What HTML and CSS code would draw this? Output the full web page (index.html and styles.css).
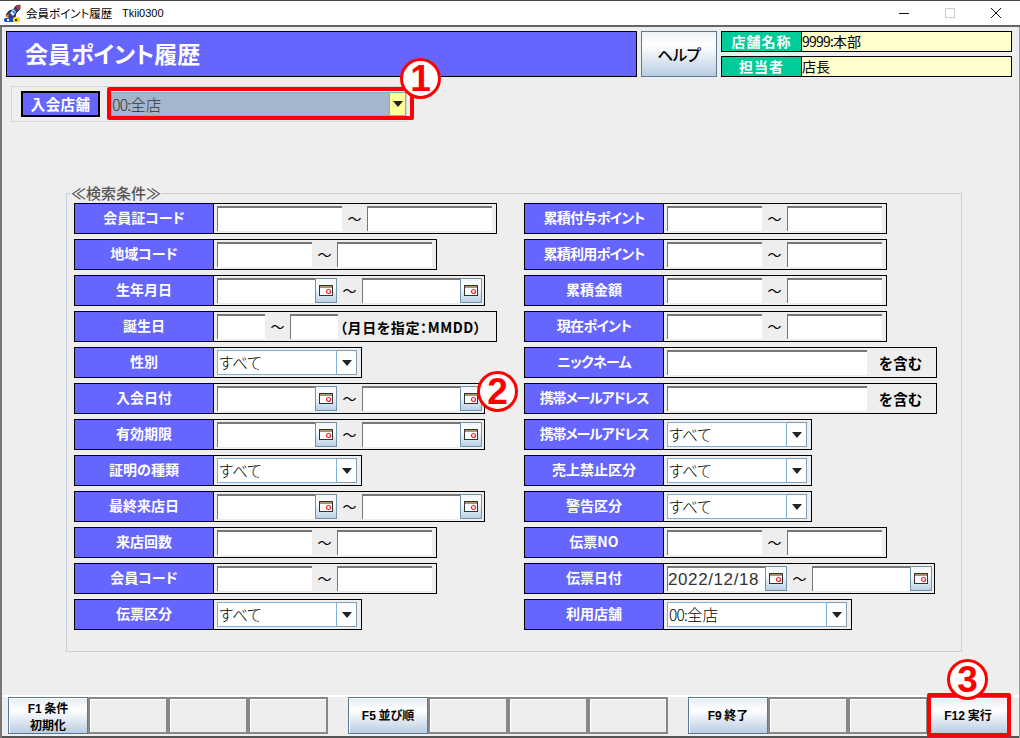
FILE: index.html
```html
<!DOCTYPE html>
<html lang="ja">
<head>
<meta charset="utf-8">
<title>会員ポイント履歴</title>
<link rel="stylesheet" href="styles.css">
</head>
<body>
<div class="window">
  <div class="titlebar">
    <svg class="appicon" width="18" height="18" viewBox="0 0 18 18"><path d="M2 11 L5 7 L9 6 L12 2 L16 1 L16 5 L12 9 L11 13 L7 15 Z" fill="#2a3a8c" stroke="#111" stroke-width=".8"/><path d="M12 2 L16 1 L16 5 L14 6 Z" fill="#e03020"/><path d="M6 9 L10 5 L12 8 L9 12 Z" fill="#e8eefc"/><circle cx="10" cy="8" r="1.5" fill="#2a8ee0"/><path d="M1 12 L5 10 L4 14 Z" fill="#f08020"/><rect x="0" y="14" width="10" height="4" rx="1.5" fill="#1c50c0"/><rect x="9" y="13" width="7" height="5" rx="1.5" fill="#f8d800"/><rect x="3" y="15" width="2" height="2" fill="#fff"/><rect x="11" y="15" width="2" height="2" fill="#223"/></svg>
    <span class="apptitle">会員ポイント履歴</span>
    <span class="appid">Tkii0300</span>
    <div class="winctl">
      <svg width="12" height="12" viewBox="0 0 12 12"><path d="M1 6.5H11" stroke="#111" stroke-width="1"/></svg>
      <svg width="12" height="12" viewBox="0 0 12 12"><rect x="1.5" y="1.5" width="9" height="9" fill="none" stroke="#ccc"/></svg>
      <svg width="12" height="12" viewBox="0 0 12 12"><path d="M1 1L11 11M11 1L1 11" stroke="#111" stroke-width="1"/></svg>
    </div>
  </div>
  <div class="client">
    <div class="header">
      <h1 class="pagetitle">会員ポイント履歴</h1>
      <button class="help">ヘルプ</button>
      <div class="shopinfo">
        <div class="inforow"><span class="infolabel">店舗名称</span><span class="infovalue"><span class="num">9999:</span>本部</span></div>
        <div class="inforow"><span class="infolabel">担当者</span><span class="infovalue">店長</span></div>
      </div>
    </div>

    <div class="storebar">
      <span class="storelabel">入会店舗</span>
      <div class="storecombo"><span class="storevalue"><span class="num">00:</span>全店</span><span class="storearrow"><i class="tri"></i></span></div>
      <span class="redframe frame1"></span>
      <span class="marker marker1">1</span>
    </div>

    <fieldset class="search">
      <legend>≪検索条件≫</legend>
      <div class="cols">
        <div class="col">
          <div class="row"><span class="lab">会員証コード</span><div class="val"><span class="inp w125"></span><span class="til">～</span><span class="inp w125"></span></div></div>
          <div class="row"><span class="lab">地域コード</span><div class="val"><span class="inp w95"></span><span class="til">～</span><span class="inp w95"></span></div></div>
          <div class="row"><span class="lab">生年月日</span><div class="val dates"><span class="inp w98"></span><span class="cal"><svg width="14" height="11" viewBox="0 0 14 11"><use href="#calicon"/></svg></span><span class="til">～</span><span class="inp w98"></span><span class="cal"><svg width="14" height="11" viewBox="0 0 14 11"><use href="#calicon"/></svg></span></div></div>
          <div class="row"><span class="lab">誕生日</span><div class="val"><span class="inp w48"></span><span class="til">～</span><span class="inp w48"></span><span class="note">（月日を指定：MMDD）</span></div></div>
          <div class="row"><span class="lab">性別</span><div class="val"><span class="sel w120">すべて</span><span class="arrow"><i class="tri"></i></span></div></div>
          <div class="row"><span class="lab">入会日付</span><div class="val dates"><span class="inp w98"></span><span class="cal"><svg width="14" height="11" viewBox="0 0 14 11"><use href="#calicon"/></svg></span><span class="til">～</span><span class="inp w98"></span><span class="cal"><svg width="14" height="11" viewBox="0 0 14 11"><use href="#calicon"/></svg></span></div></div>
          <div class="row"><span class="lab">有効期限</span><div class="val dates"><span class="inp w98"></span><span class="cal"><svg width="14" height="11" viewBox="0 0 14 11"><use href="#calicon"/></svg></span><span class="til">～</span><span class="inp w98"></span><span class="cal"><svg width="14" height="11" viewBox="0 0 14 11"><use href="#calicon"/></svg></span></div></div>
          <div class="row"><span class="lab">証明の種類</span><div class="val"><span class="sel w120">すべて</span><span class="arrow"><i class="tri"></i></span></div></div>
          <div class="row"><span class="lab">最終来店日</span><div class="val dates"><span class="inp w98"></span><span class="cal"><svg width="14" height="11" viewBox="0 0 14 11"><use href="#calicon"/></svg></span><span class="til">～</span><span class="inp w98"></span><span class="cal"><svg width="14" height="11" viewBox="0 0 14 11"><use href="#calicon"/></svg></span></div></div>
          <div class="row"><span class="lab">来店回数</span><div class="val"><span class="inp w95"></span><span class="til">～</span><span class="inp w95"></span></div></div>
          <div class="row"><span class="lab">会員コード</span><div class="val"><span class="inp w95"></span><span class="til">～</span><span class="inp w95"></span></div></div>
          <div class="row"><span class="lab">伝票区分</span><div class="val"><span class="sel w120">すべて</span><span class="arrow"><i class="tri"></i></span></div></div>
        </div>
        <div class="col">
          <div class="row"><span class="lab tight1">累積付与ポイント</span><div class="val"><span class="inp w95"></span><span class="til">～</span><span class="inp w95"></span></div></div>
          <div class="row"><span class="lab tight1">累積利用ポイント</span><div class="val"><span class="inp w95"></span><span class="til">～</span><span class="inp w95"></span></div></div>
          <div class="row"><span class="lab">累積金額</span><div class="val"><span class="inp w95"></span><span class="til">～</span><span class="inp w95"></span></div></div>
          <div class="row"><span class="lab tight1">現在ポイント</span><div class="val"><span class="inp w95"></span><span class="til">～</span><span class="inp w95"></span></div></div>
          <div class="row"><span class="lab tight1">ニックネーム</span><div class="val"><span class="inp w200"></span><span class="incl">を含む</span></div></div>
          <div class="row"><span class="lab tight2">携帯メールアドレス</span><div class="val"><span class="inp w200"></span><span class="incl">を含む</span></div></div>
          <div class="row"><span class="lab tight2">携帯メールアドレス</span><div class="val"><span class="sel w120">すべて</span><span class="arrow"><i class="tri"></i></span></div></div>
          <div class="row"><span class="lab">売上禁止区分</span><div class="val"><span class="sel w120">すべて</span><span class="arrow"><i class="tri"></i></span></div></div>
          <div class="row"><span class="lab">警告区分</span><div class="val"><span class="sel w120">すべて</span><span class="arrow"><i class="tri"></i></span></div></div>
          <div class="row"><span class="lab">伝票NO</span><div class="val"><span class="inp w95"></span><span class="til">～</span><span class="inp w95"></span></div></div>
          <div class="row"><span class="lab">伝票日付</span><div class="val dates"><span class="inp w98 date">2022/12/18</span><span class="cal"><svg width="14" height="11" viewBox="0 0 14 11"><use href="#calicon"/></svg></span><span class="til">～</span><span class="inp w98"></span><span class="cal"><svg width="14" height="11" viewBox="0 0 14 11"><use href="#calicon"/></svg></span></div></div>
          <div class="row"><span class="lab">利用店舗</span><div class="val"><span class="sel w160"><span class="num">00:</span>全店</span><span class="arrow"><i class="tri"></i></span></div></div>
        </div>
      </div>
      <span class="marker marker2">2</span>
    </fieldset>

    <div class="fkeys">
      <div class="fgroup">
        <button class="fkey on two"><span><b class="fn">F1</b> 条件</span><span>初期化</span></button>
        <button class="fkey"></button><button class="fkey"></button><button class="fkey"></button>
      </div>
      <div class="fgroup">
        <button class="fkey on"><b class="fn">F5</b> 並び順</button>
        <button class="fkey"></button><button class="fkey"></button><button class="fkey"></button>
      </div>
      <div class="fgroup">
        <button class="fkey on"><b class="fn">F9</b> 終了</button>
        <button class="fkey"></button><button class="fkey"></button>
        <button class="fkey on"><b class="fn">F12</b> 実行</button>
      </div>
      <span class="redframe frame3"></span>
      <span class="marker marker3">3</span>
    </div>
  </div>
</div>
<svg class="defs" width="0" height="0"><defs><g id="calicon"><rect x="0.5" y="0.5" width="13" height="10" fill="#fff" stroke="#333"/><rect x="1" y="1" width="12" height="2" fill="#a8946a"/><circle cx="9.5" cy="6.5" r="2" fill="none" stroke="#e22" stroke-width="1.2"/></g></defs></svg>
</body>
</html>
```
FILE: styles.css
```css
* { box-sizing: border-box; }
html, body { margin: 0; padding: 0; width: 1020px; height: 738px; overflow: hidden; background: #eee; }
body { font-family: "Noto Sans CJK JP", "Liberation Sans", sans-serif; color: #000; }
.defs { position: absolute; }
.window { width: 1020px; height: 738px; border-top: 1px solid #444; display: flex; flex-direction: column; }
.titlebar { height: 26px; flex: none; background: #fff; display: flex; align-items: center; padding-left: 4px; font-size: 11px; border-bottom: 2px solid #666; }
.appicon { margin-right: 4px; }
.apptitle { font-size: 11.5px; width: 96px; font-feature-settings: "palt"; white-space: nowrap; }
.appid { font-family: "Liberation Sans", sans-serif; font-size: 11px; }
.winctl { margin-left: auto; display: flex; gap: 34px; margin-right: 18px; align-items: center; }
.client { flex: 1; position: relative; display: flex; flex-direction: column; border-left: 2px solid #777; border-right: 1px solid #999; padding-left: 4px; padding-top: 4px; background: #eee; }
.header { display: flex; height: 46px; }
.pagetitle { margin: 0; width: 631px; background: #66f; border: 1px solid #000; color: #fff; font-size: 23px; font-weight: 700; font-feature-settings: "palt"; padding-left: 18px; line-height: 42px; }
.help { width: 76px; margin-left: 4px; border: 1px solid #5a7a94; background: linear-gradient(#eef2f7, #fff 30%, #b9cde2); font-family: inherit; font-size: 15.5px; letter-spacing: -.4px; font-weight: 500; padding: 0; font-feature-settings: "palt"; }
.shopinfo { margin-left: 4px; width: 291px; display: flex; flex-direction: column; gap: 4px; }
.inforow { height: 21px; display: flex; border: 1px solid #000; }
.infolabel { width: 80px; background: #0c9; color: #fff; font-size: 14px; font-weight: 700; text-align: center; line-height: 18px; border-right: 1px solid #000; letter-spacing: 1px; }
.infovalue { flex: 1; background: #ffc; font-size: 14px; line-height: 18px; font-weight: 400; }
.num { letter-spacing: -.8px; }
.storebar { position: relative; margin: 9px 0 0 5px; width: 396px; height: 36px; border: 1px solid #cfd8e2; display: flex; align-items: center; padding-left: 9px; }
.storelabel { width: 80px; height: 26px; background: #66f; border: 2px solid #000; color: #fff; font-size: 14.5px; font-weight: 700; line-height: 21px; text-align: center; letter-spacing: .4px; white-space: nowrap; }
.storecombo { margin-left: 11px; width: 298px; height: 24px; display: flex; background: #a3b6cb; border: 1px solid #7fb0c8; }
.storevalue { width: 278px; font-size: 15.5px; font-weight: 300; line-height: 22px; color: #333; border-right: 1px solid #7fb0c8; }
.storearrow { flex: 1; background: #ff9; display: flex; align-items: center; justify-content: center; }
.tri { display: block; width: 0; height: 0; border-left: 5px solid transparent; border-right: 5px solid transparent; border-top: 6px solid #222; }
.redframe { position: absolute; border: 4px solid #f00; border-radius: 2px; }
.frame1 { left: 95px; top: 0; width: 307px; height: 33px; }
.marker { position: absolute; z-index: 2; width: 41px; height: 41px; border: 3px solid #f00; border-radius: 50%; background: #fff; color: #f00; font-family: "Liberation Sans", sans-serif; font-size: 37px; font-weight: 700; line-height: 35px; text-align: center; }
.marker1 { left: 388px; top: -29px; }
.search { margin: 64px 0 0 60px; padding: 0; width: 896px; height: 466px; border: 1px solid #c9cfd8; position: relative; min-inline-size: 0; }
.search legend { font-size: 15px; color: #555; padding: 0 1px; margin-left: 3px; line-height: 14px; font-weight: 500; white-space: nowrap; }
.cols { display: flex; gap: 0; padding: 3px 0 0 7px; }
.col { width: 450px; flex: none; display: flex; flex-direction: column; gap: 5px; }
.row { display: flex; height: 31px; }
.lab { width: 140px; background: #66f; border: 1px solid #000; color: #fff; font-size: 14px; font-weight: 700; text-align: center; line-height: 27px; font-feature-settings: "palt"; white-space: nowrap; flex: none; }
.tight1 { letter-spacing: -.7px; }
.tight2 { letter-spacing: -1.2px; }
.val { display: flex; align-items: center; border: 1px solid #000; border-left: 0; padding: 0 4px 0 3px; height: 31px; }
.dates { padding-right: 2px; }
.inp { display: block; flex: none; height: 25px; background: #fff; border-top: 2px solid #777; border-left: 1px solid #777; font-size: 15px; line-height: 23px; color: #333; }
.date { font-family: "Liberation Sans", sans-serif; font-size: 17px; letter-spacing: .6px; white-space: nowrap; overflow: visible; }
.w125 { width: 125px; } .w95 { width: 95px; } .w98 { width: 98px; } .w48 { width: 48px; } .w200 { width: 200px; }
.til { width: 25px; height: 25px; text-align: center; font-size: 14px; line-height: 24px; flex: none; background: #eee; }
.cal { width: 22px; height: 25px; border: 1px solid #6e93ad; background: linear-gradient(#f0f4f8, #fff 30%, #bcd0e4); display: flex; align-items: center; justify-content: center; flex: none; }
.note { font-size: 14px; font-weight: 700; width: 154px; white-space: nowrap; font-feature-settings: "palt"; letter-spacing: .6px; padding-left: 2px; }
.sel { height: 25px; display: block; background: #fff; border: 1px solid #7fb0d8; font-size: 15.5px; font-weight: 300; line-height: 22px; padding-left: 1px; font-feature-settings: "palt"; color: #000; }
.w120 { width: 120px; } .w160 { width: 160px; }
.arrow { width: 20px; height: 25px; background: #fff; border: 1px solid #7f9db5; border-left: 0; display: flex; align-items: center; justify-content: center; }
.incl { width: 65px; font-size: 14.5px; font-weight: 700; text-align: center; height: 25px; line-height: 25px; padding-left: 2px; }
.marker2 { left: 410px; top: 171px; }
.fkeys { position: absolute; left: 0; right: 0; bottom: 0; height: 43px; border-top: 2px solid #fff; padding: 0 0 2px 6px; display: flex; gap: 20px; border-bottom: 2px solid #555; }
.fgroup { display: flex; height: 37px; }
.fkey { width: 80px; height: 37px; border: 2px solid #888; background: #eee; font-family: inherit; font-size: 12px; font-weight: 700; padding: 0; line-height: 15px; font-feature-settings: "palt"; box-shadow: inset 1px 1px 0 #fff; }
.fkey.on { border: 1px solid #5a7a94; background: linear-gradient(#e6edf5, #fff 35%, #b9cde2); }
.two { display: flex; flex-direction: column; align-items: center; justify-content: center; }
.fn { font-family: "Liberation Sans", sans-serif; }
.frame3 { left: 925px; top: -4px; width: 84px; height: 44px; }
.marker3 { left: 945px; top: -38px; }
```
